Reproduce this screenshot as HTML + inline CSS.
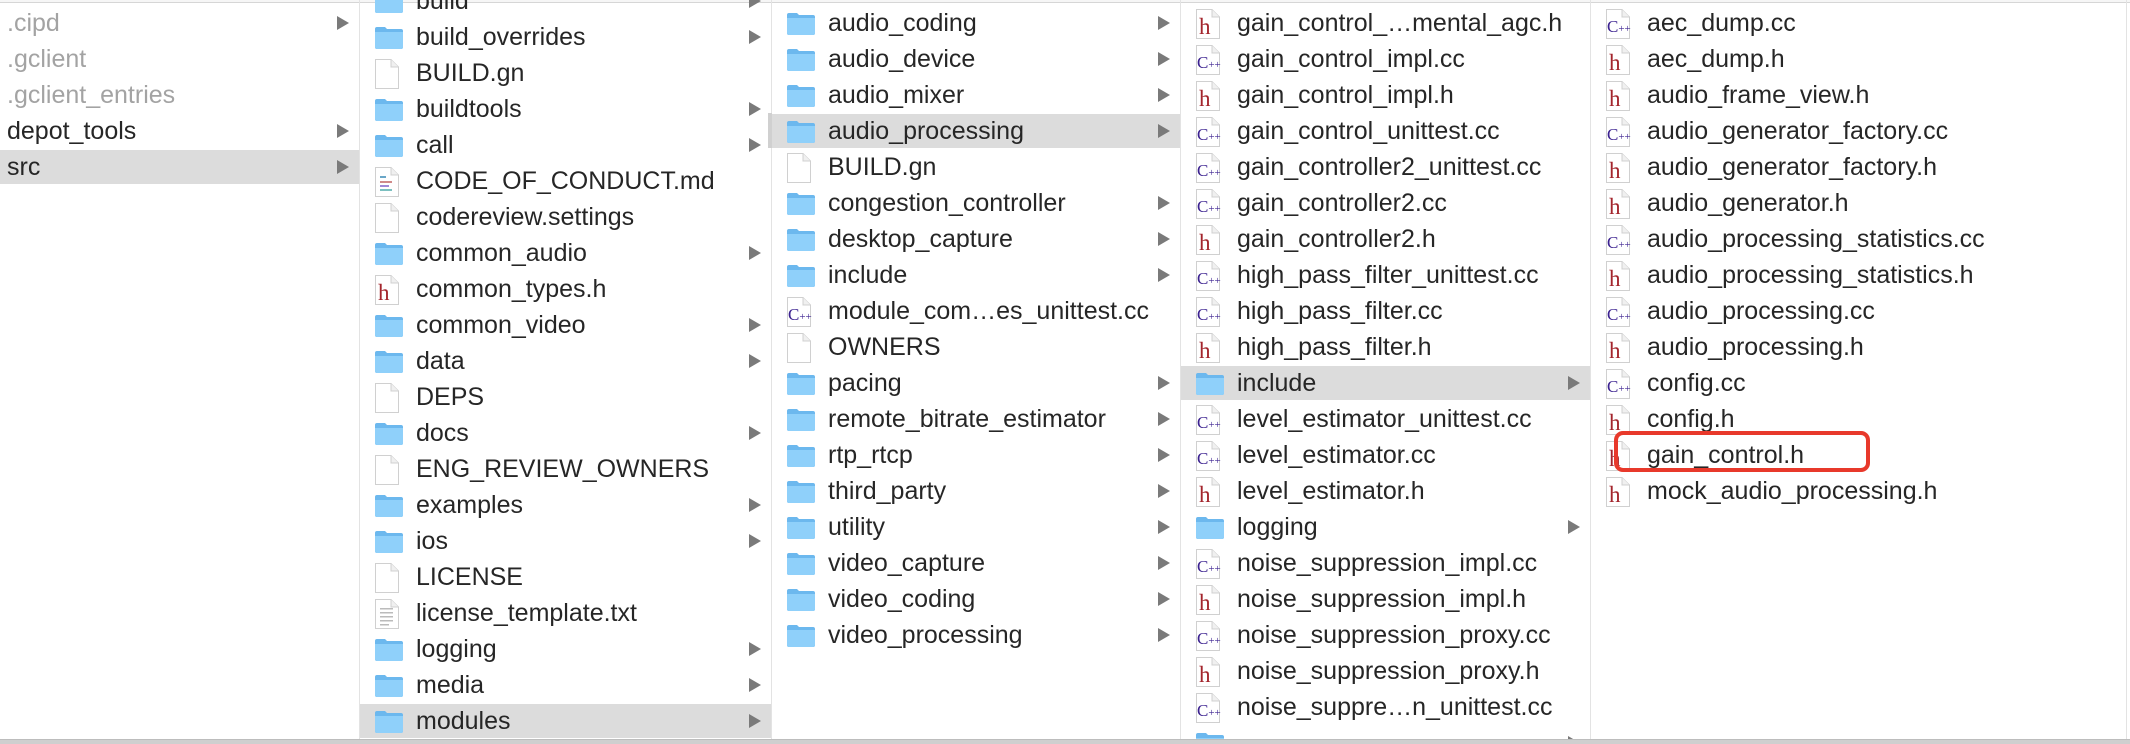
<!DOCTYPE html>
<html><head><meta charset="utf-8"><style>
*{margin:0;padding:0;box-sizing:border-box}
body{width:2130px;height:744px;overflow:hidden;background:#fff;font-family:"Liberation Sans",Arial,sans-serif;position:relative}
.top{position:absolute;left:0;top:0;width:2130px;height:3px;border-bottom:1px solid #d6d6d6;background:#f6f6f6}
.col{position:absolute;top:0;height:739px;overflow:hidden;border-right:1px solid #e3e3e3}
.r{position:relative;height:36px;line-height:36px;font-size:25px;color:#262626;white-space:nowrap}
.r.s::before{content:"";position:absolute;left:0;right:0;top:1px;height:34px;background:#dcdcdc}
.r span{position:absolute;left:56px;top:0}
.r svg{position:absolute;left:14px}
.r svg.f{top:7px}
.r svg.d{top:3px}
.r.a::after{content:"";position:absolute;right:10px;top:11px;border-left:12px solid #7a7a7a;border-top:7px solid transparent;border-bottom:7px solid transparent}
.g{color:#a3a3a3}
#c1 .r span{left:7px}
.bot{position:absolute;left:0;top:739px;width:2130px;height:5px;background:#cfcfcf;border-top:1px solid #bdbdbd}
.red{position:absolute;left:1614px;top:431px;width:256px;height:41px;border:4px solid #e8392b;border-radius:9px}
</style></head><body>
<svg width="0" height="0" style="position:absolute">
<defs>
<symbol id="fo" viewBox="0 0 30 24"><path d="M1 3 Q1 1 3 1 H11 L13 3 H27 Q29 3 29 5 V21 Q29 23 27 23 H3 Q1 23 1 21Z" fill="#6cb8ee"/><path d="M1 6 H29 V21 Q29 23 27 23 H3 Q1 23 1 21Z" fill="#8fd0fa"/></symbol>
<symbol id="dc" viewBox="0 0 26 32"><path d="M1.5 1.5 H17 L24.5 9 V30.5 H1.5Z" fill="#fff" stroke="#d0d0d0"/><path d="M17 1.5 V9 H24.5" fill="#f0f0f0" stroke="#d0d0d0"/></symbol>
<symbol id="hh" viewBox="0 0 26 32"><use href="#dc"/><text x="4" y="26" font-family="Liberation Serif,serif" font-size="23" fill="#a3252c">h</text></symbol>
<symbol id="cc" viewBox="0 0 26 32"><use href="#dc"/><text x="2" y="24" font-family="Liberation Serif,serif" fill="#3c2290"><tspan font-size="17">C</tspan><tspan font-size="11">++</tspan></text></symbol>
</defs></svg>
<div class="top"></div>

<div class="col" id="c1" style="left:0;width:360px;padding-top:5px">
<div class="r a"><span class="g">.cipd</span></div>
<div class="r"><span class="g">.gclient</span></div>
<div class="r"><span class="g">.gclient_entries</span></div>
<div class="r a"><span>depot_tools</span></div>
<div class="r a s"><span>src</span></div>
</div>

<div class="col" id="c2" style="left:360px;width:412px;padding-top:0">
<div style="margin-top:-17px"></div>
<div class="r a"><svg class="f" width="30" height="24"><use href="#fo"/></svg><span>build</span></div>
<div class="r a"><svg class="f" width="30" height="24"><use href="#fo"/></svg><span>build_overrides</span></div>
<div class="r"><svg class="d" width="26" height="32"><use href="#dc"/></svg><span>BUILD.gn</span></div>
<div class="r a"><svg class="f" width="30" height="24"><use href="#fo"/></svg><span>buildtools</span></div>
<div class="r a"><svg class="f" width="30" height="24"><use href="#fo"/></svg><span>call</span></div>
<div class="r"><svg class="d" width="26" height="32"><use href="#dc"/><rect x="6" y="10" width="6" height="2" fill="#6aa7c8"/><rect x="6" y="15" width="12" height="2" fill="#d08a8a"/><rect x="6" y="19" width="9" height="2" fill="#a08ad8"/><rect x="6" y="23" width="12" height="2" fill="#7cc0c0"/></svg><span>CODE_OF_CONDUCT.md</span></div>
<div class="r"><svg class="d" width="26" height="32"><use href="#dc"/></svg><span>codereview.settings</span></div>
<div class="r a"><svg class="f" width="30" height="24"><use href="#fo"/></svg><span>common_audio</span></div>
<div class="r"><svg class="d" width="26" height="32"><use href="#hh"/></svg><span>common_types.h</span></div>
<div class="r a"><svg class="f" width="30" height="24"><use href="#fo"/></svg><span>common_video</span></div>
<div class="r a"><svg class="f" width="30" height="24"><use href="#fo"/></svg><span>data</span></div>
<div class="r"><svg class="d" width="26" height="32"><use href="#dc"/></svg><span>DEPS</span></div>
<div class="r a"><svg class="f" width="30" height="24"><use href="#fo"/></svg><span>docs</span></div>
<div class="r"><svg class="d" width="26" height="32"><use href="#dc"/></svg><span>ENG_REVIEW_OWNERS</span></div>
<div class="r a"><svg class="f" width="30" height="24"><use href="#fo"/></svg><span>examples</span></div>
<div class="r a"><svg class="f" width="30" height="24"><use href="#fo"/></svg><span>ios</span></div>
<div class="r"><svg class="d" width="26" height="32"><use href="#dc"/></svg><span>LICENSE</span></div>
<div class="r"><svg class="d" width="26" height="32"><use href="#dc"/><rect x="6" y="10" width="13" height="1.5" fill="#bbb"/><rect x="6" y="14" width="13" height="1.5" fill="#bbb"/><rect x="6" y="18" width="13" height="1.5" fill="#bbb"/><rect x="6" y="22" width="13" height="1.5" fill="#bbb"/><rect x="6" y="26" width="9" height="1.5" fill="#bbb"/></svg><span>license_template.txt</span></div>
<div class="r a"><svg class="f" width="30" height="24"><use href="#fo"/></svg><span>logging</span></div>
<div class="r a"><svg class="f" width="30" height="24"><use href="#fo"/></svg><span>media</span></div>
<div class="r a s"><svg class="f" width="30" height="24"><use href="#fo"/></svg><span>modules</span></div>
</div>
<div style="position:absolute;left:768px;top:113px;width:4px;height:35px;background:#d0d0d0"></div>

<div class="col" id="c3" style="left:772px;width:409px;padding-top:5px">
<div class="r a"><svg class="f" width="30" height="24"><use href="#fo"/></svg><span>audio_coding</span></div>
<div class="r a"><svg class="f" width="30" height="24"><use href="#fo"/></svg><span>audio_device</span></div>
<div class="r a"><svg class="f" width="30" height="24"><use href="#fo"/></svg><span>audio_mixer</span></div>
<div class="r a s"><svg class="f" width="30" height="24"><use href="#fo"/></svg><span>audio_processing</span></div>
<div class="r"><svg class="d" width="26" height="32"><use href="#dc"/></svg><span>BUILD.gn</span></div>
<div class="r a"><svg class="f" width="30" height="24"><use href="#fo"/></svg><span>congestion_controller</span></div>
<div class="r a"><svg class="f" width="30" height="24"><use href="#fo"/></svg><span>desktop_capture</span></div>
<div class="r a"><svg class="f" width="30" height="24"><use href="#fo"/></svg><span>include</span></div>
<div class="r"><svg class="d" width="26" height="32"><use href="#cc"/></svg><span>module_com…es_unittest.cc</span></div>
<div class="r"><svg class="d" width="26" height="32"><use href="#dc"/></svg><span>OWNERS</span></div>
<div class="r a"><svg class="f" width="30" height="24"><use href="#fo"/></svg><span>pacing</span></div>
<div class="r a"><svg class="f" width="30" height="24"><use href="#fo"/></svg><span>remote_bitrate_estimator</span></div>
<div class="r a"><svg class="f" width="30" height="24"><use href="#fo"/></svg><span>rtp_rtcp</span></div>
<div class="r a"><svg class="f" width="30" height="24"><use href="#fo"/></svg><span>third_party</span></div>
<div class="r a"><svg class="f" width="30" height="24"><use href="#fo"/></svg><span>utility</span></div>
<div class="r a"><svg class="f" width="30" height="24"><use href="#fo"/></svg><span>video_capture</span></div>
<div class="r a"><svg class="f" width="30" height="24"><use href="#fo"/></svg><span>video_coding</span></div>
<div class="r a"><svg class="f" width="30" height="24"><use href="#fo"/></svg><span>video_processing</span></div>
</div>

<div class="col" id="c4" style="left:1181px;width:410px;padding-top:5px">
<div class="r"><svg class="d" width="26" height="32"><use href="#hh"/></svg><span>gain_control_…mental_agc.h</span></div>
<div class="r"><svg class="d" width="26" height="32"><use href="#cc"/></svg><span>gain_control_impl.cc</span></div>
<div class="r"><svg class="d" width="26" height="32"><use href="#hh"/></svg><span>gain_control_impl.h</span></div>
<div class="r"><svg class="d" width="26" height="32"><use href="#cc"/></svg><span>gain_control_unittest.cc</span></div>
<div class="r"><svg class="d" width="26" height="32"><use href="#cc"/></svg><span>gain_controller2_unittest.cc</span></div>
<div class="r"><svg class="d" width="26" height="32"><use href="#cc"/></svg><span>gain_controller2.cc</span></div>
<div class="r"><svg class="d" width="26" height="32"><use href="#hh"/></svg><span>gain_controller2.h</span></div>
<div class="r"><svg class="d" width="26" height="32"><use href="#cc"/></svg><span>high_pass_filter_unittest.cc</span></div>
<div class="r"><svg class="d" width="26" height="32"><use href="#cc"/></svg><span>high_pass_filter.cc</span></div>
<div class="r"><svg class="d" width="26" height="32"><use href="#hh"/></svg><span>high_pass_filter.h</span></div>
<div class="r a s"><svg class="f" width="30" height="24"><use href="#fo"/></svg><span>include</span></div>
<div class="r"><svg class="d" width="26" height="32"><use href="#cc"/></svg><span>level_estimator_unittest.cc</span></div>
<div class="r"><svg class="d" width="26" height="32"><use href="#cc"/></svg><span>level_estimator.cc</span></div>
<div class="r"><svg class="d" width="26" height="32"><use href="#hh"/></svg><span>level_estimator.h</span></div>
<div class="r a"><svg class="f" width="30" height="24"><use href="#fo"/></svg><span>logging</span></div>
<div class="r"><svg class="d" width="26" height="32"><use href="#cc"/></svg><span>noise_suppression_impl.cc</span></div>
<div class="r"><svg class="d" width="26" height="32"><use href="#hh"/></svg><span>noise_suppression_impl.h</span></div>
<div class="r"><svg class="d" width="26" height="32"><use href="#cc"/></svg><span>noise_suppression_proxy.cc</span></div>
<div class="r"><svg class="d" width="26" height="32"><use href="#hh"/></svg><span>noise_suppression_proxy.h</span></div>
<div class="r"><svg class="d" width="26" height="32"><use href="#cc"/></svg><span>noise_suppre…n_unittest.cc</span></div>
<div class="r a"><svg class="f" width="30" height="24"><use href="#fo"/></svg><span></span></div>
</div>

<div class="col" id="c5" style="left:1591px;width:536px;padding-top:5px">
<div class="r"><svg class="d" width="26" height="32"><use href="#cc"/></svg><span>aec_dump.cc</span></div>
<div class="r"><svg class="d" width="26" height="32"><use href="#hh"/></svg><span>aec_dump.h</span></div>
<div class="r"><svg class="d" width="26" height="32"><use href="#hh"/></svg><span>audio_frame_view.h</span></div>
<div class="r"><svg class="d" width="26" height="32"><use href="#cc"/></svg><span>audio_generator_factory.cc</span></div>
<div class="r"><svg class="d" width="26" height="32"><use href="#hh"/></svg><span>audio_generator_factory.h</span></div>
<div class="r"><svg class="d" width="26" height="32"><use href="#hh"/></svg><span>audio_generator.h</span></div>
<div class="r"><svg class="d" width="26" height="32"><use href="#cc"/></svg><span>audio_processing_statistics.cc</span></div>
<div class="r"><svg class="d" width="26" height="32"><use href="#hh"/></svg><span>audio_processing_statistics.h</span></div>
<div class="r"><svg class="d" width="26" height="32"><use href="#cc"/></svg><span>audio_processing.cc</span></div>
<div class="r"><svg class="d" width="26" height="32"><use href="#hh"/></svg><span>audio_processing.h</span></div>
<div class="r"><svg class="d" width="26" height="32"><use href="#cc"/></svg><span>config.cc</span></div>
<div class="r"><svg class="d" width="26" height="32"><use href="#hh"/></svg><span>config.h</span></div>
<div class="r"><svg class="d" width="26" height="32"><use href="#hh"/></svg><span>gain_control.h</span></div>
<div class="r"><svg class="d" width="26" height="32"><use href="#hh"/></svg><span>mock_audio_processing.h</span></div>
</div>

<div class="red"></div>
<div class="bot"></div>
</body></html>
